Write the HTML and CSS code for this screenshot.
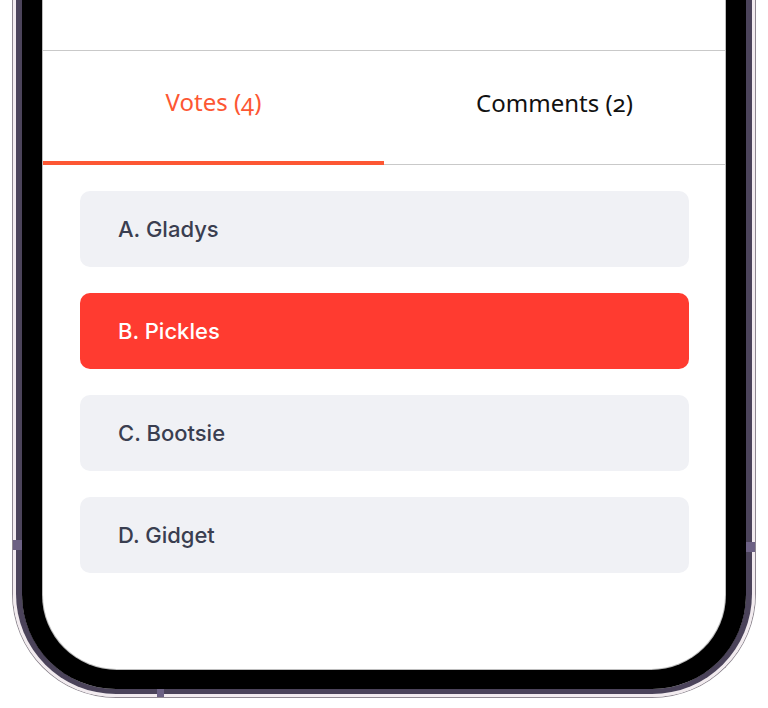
FILE: index.html
```html
<!DOCTYPE html>
<html lang="en">
<head>
<meta charset="utf-8">
<title>Votes</title>
<link rel="stylesheet" href="styles.css">
</head>
<body>
<div class="stage">
  <div class="frame">
    <span class="band band-left"></span>
    <span class="band band-right"></span>
    <span class="band band-bottom"></span>
    <div class="rim-hl">
      <div class="rim">
        <div class="bezel">
          <div class="screen">
            <div class="top-area"></div>
            <div class="tabs">
              <div class="tab tab-active">Votes (4)</div>
              <div class="tab">Comments (2)</div>
            </div>
            <div class="options">
              <div class="option">A. Gladys</div>
              <div class="option option-selected">B. Pickles</div>
              <div class="option">C. Bootsie</div>
              <div class="option">D. Gidget</div>
            </div>
          </div>
        </div>
      </div>
    </div>
  </div>
</div>
</body>
</html>
```

FILE: styles.css
```css
* { box-sizing: border-box; }
html, body {
  margin: 0;
  padding: 0;
  background: #ffffff;
}
body {
  width: 768px;
  height: 708px;
  overflow: hidden;
  font-family: "Inter", "Noto Sans", sans-serif;
}
.stage {
  padding-left: 12px;
}
.frame {
  position: relative;
  width: 744px;
  height: 698px;
  border: 1px solid #8f8891;
  border-top: 0;
  border-radius: 0 0 104px 104px;
}
.rim-hl {
  height: 100%;
  border: 3px solid #f2ebef;
  border-top: 0;
  border-radius: 0 0 103px 103px;
}
.rim {
  height: 100%;
  border: 6px solid #4b435a;
  border-bottom-width: 5px;
  border-top: 0;
  border-radius: 0 0 100px 100px;
}
.bezel {
  height: 100%;
  border: 21px solid #000000;
  border-bottom-width: 20px;
  border-top: 0;
  border-radius: 0 0 94px 94px;
}
.screen {
  height: 100%;
  background: #ffffff;
  border-radius: 0 0 74px 74px;
  box-shadow: 0 0 0 1px #bdbdbd;
  overflow: hidden;
}
.top-area {
  height: 51px;
  border-bottom: 1px solid #c9c9c9;
}
.tabs {
  display: flex;
  height: 114px;
  border-bottom: 1px solid #c9c9c9;
}
.tab {
  flex: 1;
  display: flex;
  align-items: center;
  justify-content: center;
  padding-bottom: 11px;
  font-family: "Noto Sans", "Open Sans", sans-serif;
  font-size: 24px;
  font-variant-numeric: oldstyle-nums;
  color: #111111;
}
.tab-active {
  color: #fd5733;
  border-bottom: 4px solid #fd5733;
  margin-bottom: -1px;
  padding-bottom: 9px;
}
.options {
  display: flex;
  flex-direction: column;
  gap: 26px;
  padding: 26px 36px 0 37px;
}
.option {
  height: 76px;
  display: flex;
  align-items: center;
  padding-left: 38px;
  background: #f0f1f5;
  border-radius: 10px;
  font-size: 22px;
  font-weight: 500;
  color: #3a3e50;
}
.option-selected {
  background: #ff3b30;
  color: #ffffff;
}
.band {
  position: absolute;
  background: #6c6184;
}
.band-left {
  left: 0;
  top: 540px;
  width: 9px;
  height: 10px;
}
.band-right {
  right: 0;
  top: 542px;
  width: 9px;
  height: 10px;
}
.band-bottom {
  left: 144px;
  bottom: 0;
  width: 7px;
  height: 8px;
}
```
